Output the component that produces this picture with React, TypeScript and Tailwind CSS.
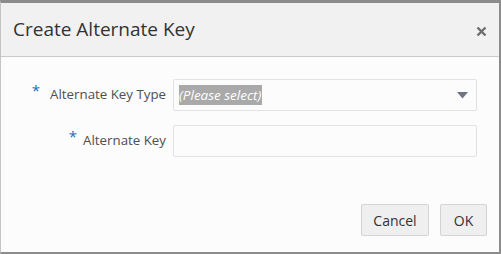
import React from "react";

const font = { fontFamily: '"Open Sans", "Noto Sans", sans-serif' };

function Field({ label, tight, children }: { label: string; tight?: boolean; children: React.ReactNode }) {
  return (
    <div className="flex items-center h-8">
      <div className="w-[165px] flex justify-end items-center shrink-0">
        <span className={(tight ? "mr-[6px]" : "mr-[10px]") + " text-[#1a6fb8] text-[15px] leading-none -mt-[10px]"}>*</span>
        <span className="text-[13.3px] text-[#4f4f4f]">{label}</span>
      </div>
      <div className="ml-[7px]">{children}</div>
    </div>
  );
}

export default function App() {
  return (
    <div
      className="w-[501px] h-[254px] flex flex-col bg-[#fcfcfc] border-t-[3px] border-t-[#8c8c8c] border-l border-l-[#c4c4c4] border-r-2 border-r-[#8c8c8c] border-b-2 border-b-[#8c8c8c]"
      style={font}
    >
      {/* Header */}
      <div className="h-[54px] shrink-0 flex items-center justify-between bg-[#f1f1f1] border-b border-[#cacaca] pl-[12px] pr-[12px]">
        <h1 className="text-[19px] text-[#333] font-normal">Create Alternate Key</h1>
        <svg width="11" height="11" viewBox="0 0 11 11" className="mt-[3px]">
          <path d="M1.5 1.5 L9.5 9.5 M9.5 1.5 L1.5 9.5" stroke="#6e6e6e" strokeWidth="2.4" strokeLinecap="butt" />
        </svg>
      </div>

      {/* Body */}
      <div className="flex-1 flex flex-col pt-[22px]">
        <div className="flex flex-col gap-[14px]">
          <Field label="Alternate Key Type">
            <div className="w-[304px] h-8 border border-[#e2e2e2] rounded-[2px] bg-[#fcfcfc] flex items-center justify-between pl-[5px] pr-[8px]">
              <span className="bg-[#a9a9a9] text-white italic text-[13.5px] leading-[20px] pr-[1px]">(Please select)</span>
              <svg width="11" height="7" viewBox="0 0 11 7">
                <path d="M0 0 H11 L5.5 6.5 Z" fill="#6f7480" />
              </svg>
            </div>
          </Field>
          <Field label="Alternate Key" tight>
            <div className="w-[304px] h-8 border border-[#e2e2e2] rounded-[2px] bg-[#fcfcfc]" />
          </Field>
        </div>

        {/* Footer */}
        <div className="mt-auto flex justify-end gap-[11px] pr-[12px] pb-[16px]">
          <button className="w-[68px] h-8 bg-[#efefef] border border-[#d4d4d4] rounded-[2px] text-[14px] text-[#333]">
            Cancel
          </button>
          <button className="w-[47px] h-8 bg-[#efefef] border border-[#d4d4d4] rounded-[2px] text-[14px] text-[#333]">
            OK
          </button>
        </div>
      </div>
    </div>
  );
}
